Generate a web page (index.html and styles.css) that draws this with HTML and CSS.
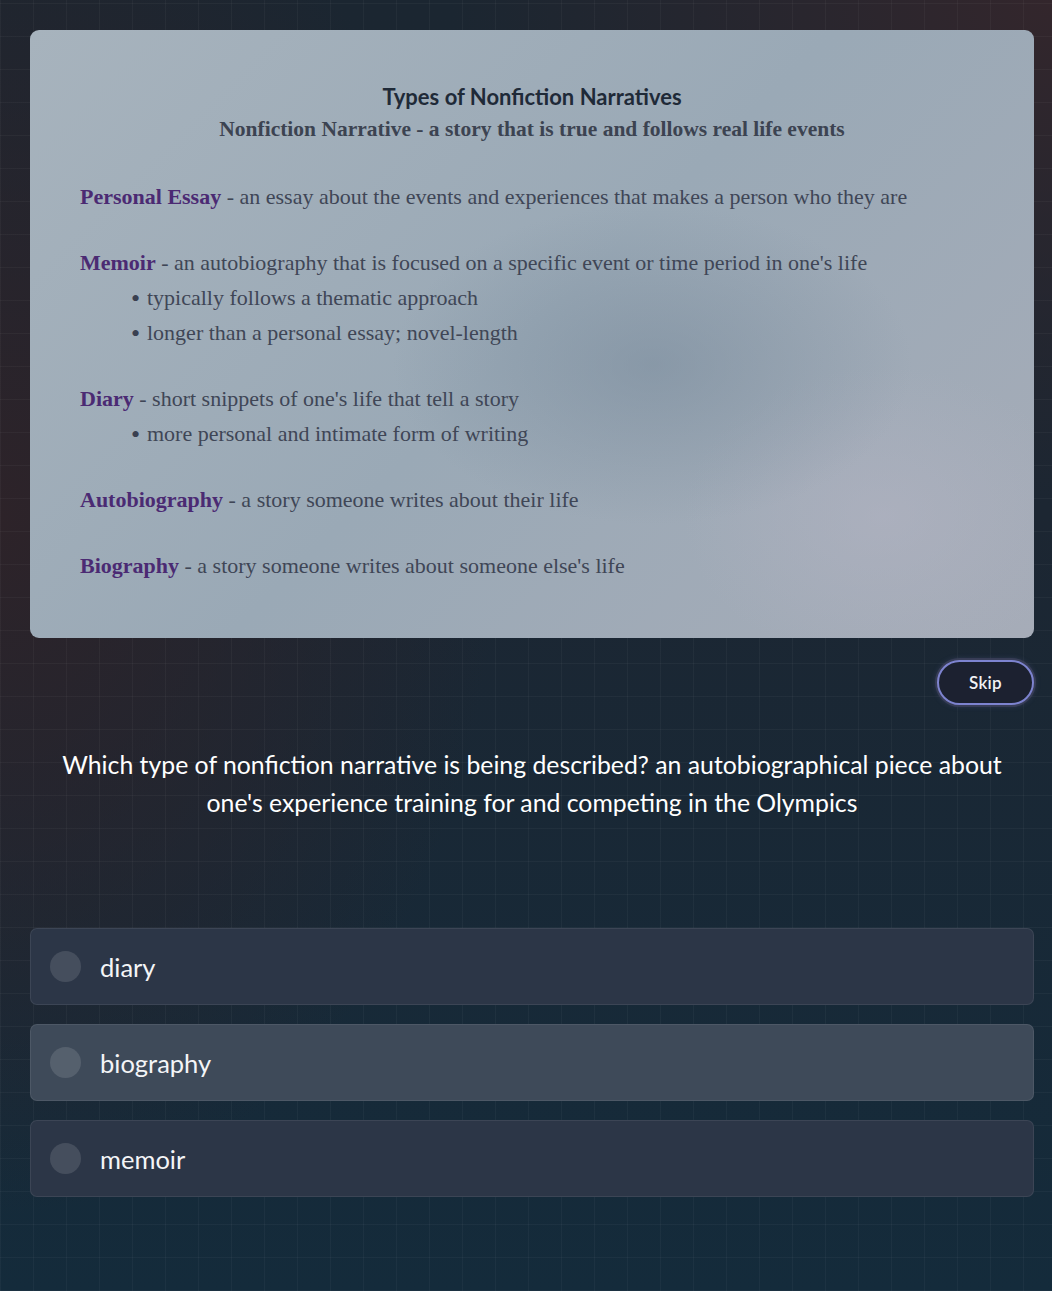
FILE: index.html
```html
<!DOCTYPE html>
<html lang="en">
<head>
  <meta charset="UTF-8">
  <meta name="viewport" content="width=device-width, initial-scale=1.0">
  <title>Nonfiction Narratives - Practice</title>
  <link rel="stylesheet" href="styles.css">
</head>
<body>

  <main class="quiz">
    <section class="notes-card">
      <h2 class="notes-title">Types of Nonfiction Narratives</h2>
      <p class="notes-subtitle">Nonfiction Narrative - a story that is true and follows real life events</p>

      <div class="term">
        <p><b>Personal Essay</b> - an essay about the events and experiences that makes a person who they are</p>
      </div>
      <div class="term">
        <p><b>Memoir</b> - an autobiography that is focused on a specific event or time period in one's life</p>
        <ul>
          <li>typically follows a thematic approach</li>
          <li>longer than a personal essay; novel-length</li>
        </ul>
      </div>
      <div class="term">
        <p><b>Diary</b> - short snippets of one's life that tell a story</p>
        <ul>
          <li>more personal and intimate form of writing</li>
        </ul>
      </div>
      <div class="term">
        <p><b>Autobiography</b> - a story someone writes about their life</p>
      </div>
      <div class="term">
        <p><b>Biography</b> - a story someone writes about someone else's life</p>
      </div>
    </section>

    <div class="skip-row">
      <button type="button" class="btn-skip">Skip</button>
    </div>

    <h1 class="question">Which type of nonfiction narrative is being described? an autobiographical piece about one's experience training for and competing in the Olympics</h1>

    <div class="answers">
      <label class="answer"><span class="radio"></span> diary</label>
      <label class="answer answer-hover"><span class="radio"></span> biography</label>
      <label class="answer"><span class="radio"></span> memoir</label>
    </div>
  </main>

</body>
</html>
```

FILE: styles.css
```css
html, body {
  margin: 0;
  min-height: 100%;
}

body {
  min-height: 1291px;
  font-family: 'Lato', 'Open Sans', sans-serif;
  color: #fff;
  background-color: #172834;
  background-image:
    repeating-linear-gradient(90deg, rgba(255,255,255,0.035) 0 1px, transparent 1px 33px),
    repeating-linear-gradient(0deg, rgba(255,255,255,0.035) 0 1px, transparent 1px 33px),
    radial-gradient(ellipse 600px 500px at 100% 0%, #33262c 0%, rgba(51,38,44,0) 100%),
    radial-gradient(ellipse 500px 700px at 0% 40%, #2d2329 0%, rgba(45,35,41,0) 100%),
    linear-gradient(180deg, #1b2631 0%, #1c2632 40%, #142b3b 100%);
}

.quiz {
  padding: 30px 18px 80px 30px;
}

/* notes card */
.notes-card {
  border-radius: 9px;
  padding: 52px 50px 55px;
  color: #3f4656;
  background-color: #a0aebb;
  background-image:
    radial-gradient(ellipse 260px 160px at 62% 55%, rgba(120,138,155,0.55), rgba(120,138,155,0)),
    radial-gradient(ellipse 200px 150px at 85% 80%, rgba(180,180,195,0.5), rgba(180,180,195,0)),
    linear-gradient(135deg, #a7b3bd 0%, #9aa9b6 50%, #a6acb8 100%);
  font-family: 'Liberation Serif', 'Times New Roman', serif;
  font-size: 22px;
}

.notes-title {
  margin: 0;
  text-align: center;
  font-family: 'Lato', sans-serif;
  font-size: 22px;
  font-weight: 700;
  color: #1f2a38;
  line-height: 30px;
}

.notes-subtitle {
  margin: 2px 0 35px;
  text-align: center;
  font-weight: 700;
  font-size: 21.5px;
  line-height: 30px;
  color: #3c4351;
}

.term {
  margin-bottom: 31px;
}

.term:last-child {
  margin-bottom: 0;
}

.term p {
  margin: 0;
  line-height: 35px;
}

.term b {
  color: #4b2a73;
}

.term ul {
  margin: 0;
  padding-left: 51px;
  list-style: none;
}

.term li {
  line-height: 35px;
}

.term li::before {
  content: "\2022";
  display: inline-block;
  width: 16px;
  font-size: 26px;
  line-height: 0;
  vertical-align: -2px;
  color: #3a4050;
}

/* skip */
.skip-row {
  display: flex;
  justify-content: flex-end;
  margin-top: 22px;
}

.btn-skip {
  width: 97px;
  height: 45px;
  border-radius: 23px;
  border: 2px solid #7d83cf;
  background: #1c2130;
  color: #f2f2f5;
  font-family: 'Lato', sans-serif;
  font-size: 17px;
  font-weight: 600;
  letter-spacing: 0.3px;
  box-shadow: 0 0 0 2px rgba(60,64,90,0.8), 0 0 6px rgba(120,125,200,0.35);
  cursor: pointer;
}

/* question */
.question {
  margin: 41px 0 0;
  padding: 0 30px;
  text-align: center;
  font-size: 24.8px;
  font-weight: 400;
  line-height: 38px;
  color: #fff;
}

.answers {
  display: flex;
  flex-direction: column;
  gap: 19px;
  margin-top: 106px;
}

.answer {
  display: flex;
  align-items: center;
  gap: 19px;
  height: 77px;
  box-sizing: border-box;
  padding: 0 19px;
  border-radius: 7px;
  border: 1px solid rgba(255,255,255,0.08);
  background: #2c3647;
  font-size: 25.5px;
  color: #f4f5f7;
  cursor: pointer;
}

.answer-hover {
  background: #3e4a59;
}

.radio {
  width: 31px;
  height: 31px;
  border-radius: 50%;
  background: rgba(255,255,255,0.12);
}
```
